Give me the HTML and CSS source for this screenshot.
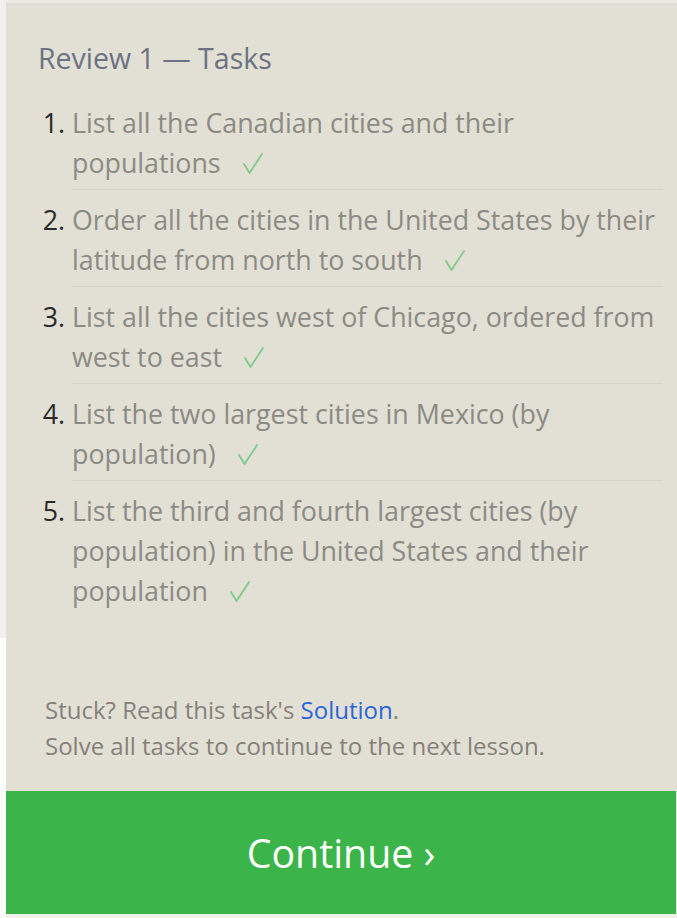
FILE: index.html
```html
<!DOCTYPE html>
<html lang="en">
<head>
<meta charset="utf-8">
<title>Review 1 — Tasks</title>
<link rel="stylesheet" href="styles.css">
</head>
<body>
<div class="page">
  <div class="side"><div class="side-fill"></div></div>
  <div class="main">
    <div class="topbar"></div>
    <section class="panel">
      <div class="content">
        <h2 class="title">Review 1 — Tasks</h2>
        <ol class="tasks">
          <li>List all the Canadian cities and their populations<svg class="check" viewBox="0 0 20 21" width="20" height="21" aria-hidden="true"><path d="M1 11 L6.5 20 L19 1"/></svg></li>
          <li>Order all the cities in the United States by their latitude from north to south<svg class="check" viewBox="0 0 20 21" width="20" height="21" aria-hidden="true"><path d="M1 11 L6.5 20 L19 1"/></svg></li>
          <li>List all the cities west of Chicago, ordered from west to east<svg class="check" viewBox="0 0 20 21" width="20" height="21" aria-hidden="true"><path d="M1 11 L6.5 20 L19 1"/></svg></li>
          <li>List the two largest cities in Mexico (by population)<svg class="check" viewBox="0 0 20 21" width="20" height="21" aria-hidden="true"><path d="M1 11 L6.5 20 L19 1"/></svg></li>
          <li class="last">List the third and fourth largest cities (by population) in the United States and their population<svg class="check" viewBox="0 0 20 21" width="20" height="21" aria-hidden="true"><path d="M1 11 L6.5 20 L19 1"/></svg></li>
        </ol>
      </div>
      <div class="footer">
        <p>Stuck? Read this task's <a href="#">Solution</a>.</p>
        <p>Solve all tasks to continue to the next lesson.</p>
      </div>
      <button class="continue">Continue ›</button>
    </section>
    <div class="bottombar"></div>
  </div>
</div>
</body>
</html>
```
FILE: styles.css
```css
html, body {
  margin: 0;
  padding: 0;
  background: #ffffff;
}
body {
  font-family: "Open Sans", "Noto Sans", sans-serif;
}
.page {
  display: flex;
  width: 677px;
  height: 918px;
}
.side {
  width: 6px;
  flex: none;
}
.side-fill {
  height: 638px;
  background: #f0f0f0;
}
.main {
  flex: 1;
  display: flex;
  flex-direction: column;
}
.topbar {
  height: 3px;
  background: #eae9e2;
}
.bottombar {
  height: 4px;
  background: #f0efe9;
}
.panel {
  flex: 1;
  background: #e2e0d5;
  display: flex;
  flex-direction: column;
}
.content {
  flex: 1;
  padding: 0 14px 0 32px;
}
.title {
  margin: 0;
  padding-top: 37px;
  font-size: 28.5px;
  line-height: 36px;
  font-weight: 400;
  color: #6b7282;
}
.tasks {
  margin: 17px 0 0 0;
  padding-left: 34px;
}
.tasks li {
  font-size: 26.8px;
  line-height: 40px;
  color: #8b8a84;
  padding: 10px 0 6px;
  border-bottom: 1px solid #d6d4c9;
}
.tasks li.last {
  border-bottom: none;
}
.tasks li::marker {
  color: #2a2a2a;
}
.check {
  display: inline-block;
  margin-left: 22px;
  vertical-align: -1px;
  fill: none;
  stroke: #7ecb89;
  stroke-width: 1.8;
  stroke-linecap: round;
  stroke-linejoin: round;
}
.footer {
  padding: 0 0 27px 39px;
}
.footer p {
  margin: 0;
  font-size: 24px;
  line-height: 36px;
  color: #85807a;
}
.footer a {
  color: #2a66d9;
  text-decoration: none;
}
.continue {
  display: block;
  width: 670px;
  height: 123px;
  border: none;
  margin: 0;
  padding: 0;
  background: #3bb54a;
  color: #ffffff;
  font-family: "Open Sans", "Noto Sans", sans-serif;
  font-size: 39.3px;
  cursor: pointer;
}
```
